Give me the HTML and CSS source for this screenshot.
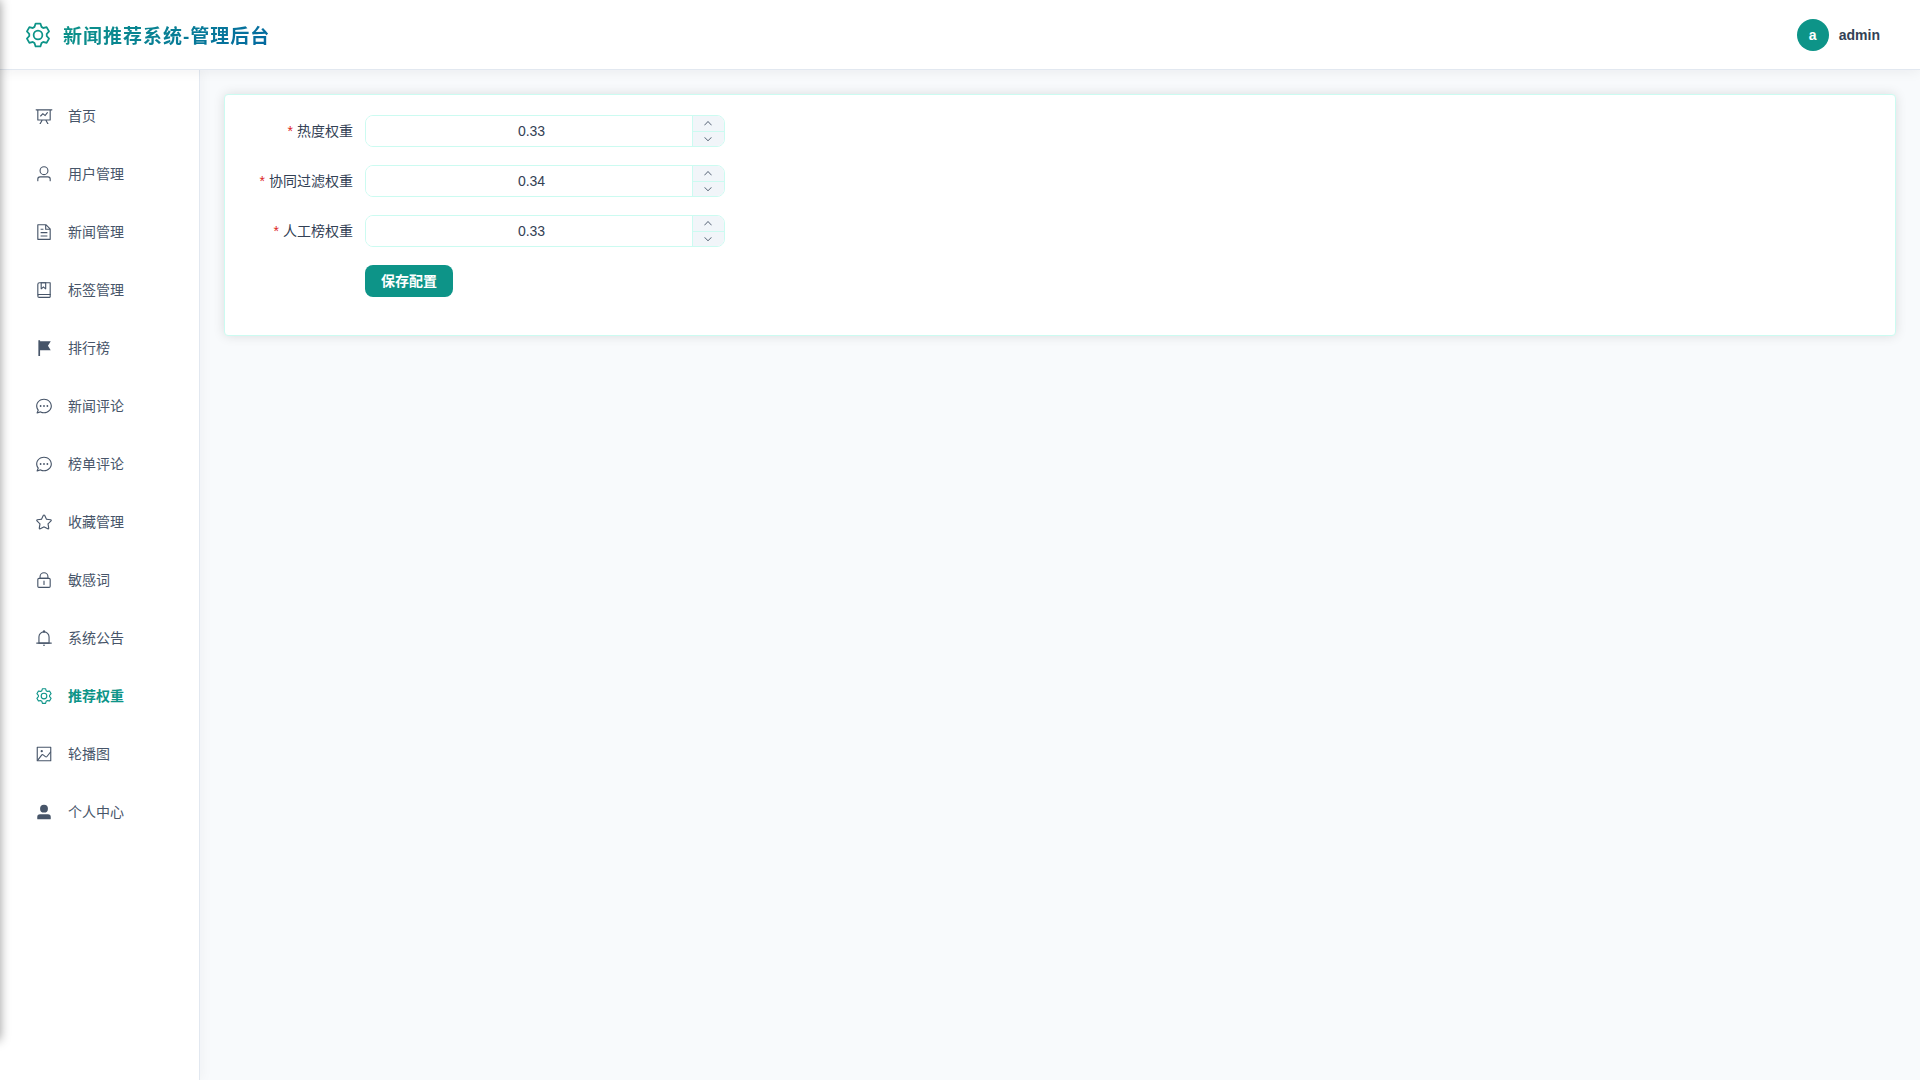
FILE: index.html
```html
<!DOCTYPE html>
<html lang="zh-CN">
<head>
  <meta charset="UTF-8">
  <meta name="viewport" content="width=device-width, initial-scale=1.0">
  <title>新闻推荐系统-管理后台</title>
  <link rel="stylesheet" href="styles.css">
</head>
<body>
  <!-- Icons -->
  <svg class="icon-sprite" xmlns="http://www.w3.org/2000/svg">
    <symbol id="icon-setting" viewBox="0 0 1024 1024"><path d="M600.704 64a32 32 0 0 1 30.464 22.208l35.2 109.376c14.784 7.232 28.928 15.36 42.432 24.512l112.384-24.192a32 32 0 0 1 34.432 15.36L944.32 364.8a32 32 0 0 1-4.032 37.504l-77.12 85.12a357.12 357.12 0 0 1 0 49.024l77.12 85.248a32 32 0 0 1 4.032 37.504l-88.704 153.6a32 32 0 0 1-34.432 15.296L708.8 803.904c-13.44 9.088-27.648 17.28-42.368 24.512l-35.264 109.376A32 32 0 0 1 600.704 960H423.296a32 32 0 0 1-30.464-22.208L357.696 828.48a351.616 351.616 0 0 1-42.56-24.64l-112.32 24.256a32 32 0 0 1-34.432-15.36L79.68 659.2a32 32 0 0 1 4.032-37.504l77.12-85.248a357.12 357.12 0 0 1 0-48.896l-77.12-85.248A32 32 0 0 1 79.68 364.8l88.704-153.6a32 32 0 0 1 34.432-15.296l112.32 24.256c13.568-9.152 27.776-17.408 42.56-24.64l35.2-109.312A32 32 0 0 1 423.232 64H600.64zm-23.424 64H446.72l-36.352 113.088-24.512 11.968a294.113 294.113 0 0 0-34.816 20.096l-22.656 15.36-116.224-25.088-65.28 113.152 79.68 88.192-1.92 27.136a293.12 293.12 0 0 0 0 40.192l1.92 27.136-79.808 88.192 65.344 113.152 116.224-25.024 22.656 15.296a294.113 294.113 0 0 0 34.816 20.096l24.512 11.968L446.72 896h130.688l36.48-113.152 24.448-11.904a288.282 288.282 0 0 0 34.752-20.096l22.592-15.296 116.288 25.024 65.28-113.152-79.744-88.192 1.92-27.136a293.12 293.12 0 0 0 0-40.256l-1.92-27.136 79.808-88.128-65.344-113.152-116.288 24.96-22.592-15.232a287.616 287.616 0 0 0-34.752-20.096l-24.448-11.904L577.344 128zM512 320a192 192 0 1 1 0 384 192 192 0 0 1 0-384m0 64a128 128 0 1 0 0 256 128 128 0 0 0 0-256"/></symbol>
    <symbol id="icon-data" viewBox="0 0 1024 1024"><path d="M359.168 768H160a32 32 0 0 1-32-32V192H64a32 32 0 0 1 0-64h896a32 32 0 1 1 0 64h-64v544a32 32 0 0 1-32 32H665.216l110.848 192h-73.856L591.36 768H433.024L322.176 960H248.32zM832 192H192v512h640zM342.656 534.656a32 32 0 1 1-45.312-45.312L444.992 341.76l125.44 94.08L679.04 300.032a32 32 0 1 1 49.92 39.936L581.632 524.224 451.008 426.24z"/></symbol>
    <symbol id="icon-user" viewBox="0 0 1024 1024"><path d="M512 512a192 192 0 1 0 0-384 192 192 0 0 0 0 384m0 64a256 256 0 1 1 0-512 256 256 0 0 1 0 512m320 320v-96a96 96 0 0 0-96-96H288a96 96 0 0 0-96 96v96a32 32 0 1 1-64 0v-96a160 160 0 0 1 160-160h448a160 160 0 0 1 160 160v96a32 32 0 1 1-64 0"/></symbol>
    <symbol id="icon-document" viewBox="0 0 1024 1024"><path d="M832 384H576V128H192v768h640zm-26.496-64L640 154.496V320zM160 64h480l256 256v608a32 32 0 0 1-32 32H160a32 32 0 0 1-32-32V96a32 32 0 0 1 32-32m160 448h384v64H320zm0-192h160v64H320zm0 384h384v64H320z"/></symbol>
    <symbol id="icon-collection" viewBox="0 0 1024 1024"><path d="M192 736h640V128H256a64 64 0 0 0-64 64zm64-672h608a32 32 0 0 1 32 32v672a32 32 0 0 1-32 32H160l-32 57.536V192A128 128 0 0 1 256 64"/><path d="M240 800a48 48 0 1 0 0 96h592v-96zm0-64h656v160a64 64 0 0 1-64 64H240a112 112 0 0 1 0-224m144-608v250.88l96-76.8 96 76.8V128zm-64-64h320v381.44a32 32 0 0 1-51.968 24.96L480 384l-108.032 86.4A32 32 0 0 1 320 445.44z"/></symbol>
    <symbol id="icon-flag" viewBox="0 0 1024 1024"><path d="M288 128h608L736 384l160 256H288v320h-96V64h96z"/></symbol>
    <symbol id="icon-chat" viewBox="0 0 1024 1024"><path d="m174.72 855.68 135.296-45.12 23.68 11.84C388.096 849.536 448.576 864 512 864c211.84 0 384-166.784 384-352S723.84 160 512 160 128 326.784 128 512c0 69.12 24.96 139.264 70.848 199.232l22.08 28.8-46.272 115.584zm-45.248 82.56A32 32 0 0 1 89.6 896l58.368-145.92C94.72 680.32 64 596.864 64 512 64 299.904 256 96 512 96s448 203.904 448 416-192 416-448 416a461.056 461.056 0 0 1-206.912-48.384l-175.616 58.56z"/><path d="M512 563.2a51.2 51.2 0 1 1 0-102.4 51.2 51.2 0 0 1 0 102.4m192 0a51.2 51.2 0 1 1 0-102.4 51.2 51.2 0 0 1 0 102.4m-384 0a51.2 51.2 0 1 1 0-102.4 51.2 51.2 0 0 1 0 102.4"/></symbol>
    <symbol id="icon-star" viewBox="0 0 1024 1024"><path d="m512 747.84 228.16 119.936a6.4 6.4 0 0 0 9.28-6.72l-43.52-254.08 184.512-179.904a6.4 6.4 0 0 0-3.52-10.88l-255.104-37.12L517.76 147.904a6.4 6.4 0 0 0-11.52 0L392.192 379.072l-255.104 37.12a6.4 6.4 0 0 0-3.52 10.88L318.08 606.976l-43.584 254.08a6.4 6.4 0 0 0 9.28 6.72zM313.6 924.48a70.4 70.4 0 0 1-102.144-74.24l37.888-220.928L88.96 472.96A70.4 70.4 0 0 1 128 352.896l221.76-32.256 99.2-200.96a70.4 70.4 0 0 1 126.208 0l99.2 200.96 221.824 32.256a70.4 70.4 0 0 1 39.04 120.064L774.72 629.376l37.888 220.928a70.4 70.4 0 0 1-102.144 74.24L512 820.096l-198.4 104.32z"/></symbol>
    <symbol id="icon-lock" viewBox="0 0 1024 1024"><path d="M224 448a32 32 0 0 0-32 32v384a32 32 0 0 0 32 32h576a32 32 0 0 0 32-32V480a32 32 0 0 0-32-32zm0-64h576a96 96 0 0 1 96 96v384a96 96 0 0 1-96 96H224a96 96 0 0 1-96-96V480a96 96 0 0 1 96-96"/><path d="M512 544a32 32 0 0 1 32 32v192a32 32 0 1 1-64 0V576a32 32 0 0 1 32-32m192-160v-64a192 192 0 1 0-384 0v64zM512 64a256 256 0 0 1 256 256v128H256V320A256 256 0 0 1 512 64"/></symbol>
    <symbol id="icon-bell" viewBox="0 0 1024 1024"><path d="M512 64a64 64 0 0 1 64 64v64H448v-64a64 64 0 0 1 64-64"/><path d="M256 768h512V448a256 256 0 1 0-512 0zm256-640a320 320 0 0 1 320 320v384H192V448a320 320 0 0 1 320-320"/><path d="M96 768h832q32 0 32 32t-32 32H96q-32 0-32-32t32-32m352 128h128a64 64 0 0 1-128 0"/></symbol>
    <symbol id="icon-picture" viewBox="0 0 1024 1024"><path d="M160 160v704h704V160zm-32-64h768a32 32 0 0 1 32 32v768a32 32 0 0 1-32 32H128a32 32 0 0 1-32-32V128a32 32 0 0 1 32-32"/><path d="M384 288q64 0 64 64t-64 64q-64 0-64-64t64-64M185.408 876.992l-50.816-38.912L350.72 556.032a96 96 0 0 1 134.592-17.856l1.856 1.472 122.88 99.136a32 32 0 0 0 44.992-4.864l216-269.888 49.92 39.936-215.808 269.824-.256.32a96 96 0 0 1-135.04 14.464l-122.88-99.072-.64-.512a32 32 0 0 0-44.8 5.952z"/></symbol>
    <symbol id="icon-user-filled" viewBox="0 0 1024 1024"><path d="M288 320a224 224 0 1 0 448 0 224 224 0 1 0-448 0m544 608H160a32 32 0 0 1-32-32v-96a160 160 0 0 1 160-160h448a160 160 0 0 1 160 160v96a32 32 0 0 1-32 32z"/></symbol>
    <symbol id="icon-up" viewBox="0 0 1024 1024"><path d="m488.832 344.32-339.84 356.672a32 32 0 0 0 0 44.16l.384.384a29.44 29.44 0 0 0 42.688 0l320-335.872 319.872 335.872a29.44 29.44 0 0 0 42.688 0l.384-.384a32 32 0 0 0 0-44.16L535.168 344.32a32 32 0 0 0-46.336 0"/></symbol>
    <symbol id="icon-down" viewBox="0 0 1024 1024"><path d="M831.872 340.864 512 652.672 192.128 340.864a30.592 30.592 0 0 0-42.752 0 29.12 29.12 0 0 0 0 41.6L489.664 714.24a32 32 0 0 0 44.672 0l340.288-331.712a29.12 29.12 0 0 0 0-41.728 30.592 30.592 0 0 0-42.752 0z"/></symbol>
  </svg>

  <!-- Header -->
  <header class="header">
    <div class="brand">
      <svg class="brand-icon"><use href="#icon-setting"/></svg>
      <span class="brand-title">新闻推荐系统-管理后台</span>
    </div>
    <button type="button" class="profile">
      <span class="avatar">a</span>
      <span class="username">admin</span>
    </button>
  </header>

  <div class="layout">
    <!-- Sidebar -->
    <nav class="sidebar">
      <a href="#" class="menu-item"><svg class="menu-icon"><use href="#icon-data"/></svg>首页</a>
      <a href="#" class="menu-item"><svg class="menu-icon"><use href="#icon-user"/></svg>用户管理</a>
      <a href="#" class="menu-item"><svg class="menu-icon"><use href="#icon-document"/></svg>新闻管理</a>
      <a href="#" class="menu-item"><svg class="menu-icon"><use href="#icon-collection"/></svg>标签管理</a>
      <a href="#" class="menu-item"><svg class="menu-icon"><use href="#icon-flag"/></svg>排行榜</a>
      <a href="#" class="menu-item"><svg class="menu-icon"><use href="#icon-chat"/></svg>新闻评论</a>
      <a href="#" class="menu-item"><svg class="menu-icon"><use href="#icon-chat"/></svg>榜单评论</a>
      <a href="#" class="menu-item"><svg class="menu-icon"><use href="#icon-star"/></svg>收藏管理</a>
      <a href="#" class="menu-item"><svg class="menu-icon"><use href="#icon-lock"/></svg>敏感词</a>
      <a href="#" class="menu-item"><svg class="menu-icon"><use href="#icon-bell"/></svg>系统公告</a>
      <a href="#" class="menu-item active"><svg class="menu-icon"><use href="#icon-setting"/></svg>推荐权重</a>
      <a href="#" class="menu-item"><svg class="menu-icon"><use href="#icon-picture"/></svg>轮播图</a>
      <a href="#" class="menu-item"><svg class="menu-icon"><use href="#icon-user-filled"/></svg>个人中心</a>
    </nav>

    <!-- Main Content -->
    <main class="main">
      <section class="card">
        <form class="weight-form">
          <div class="form-item">
            <label for="hot">热度权重</label>
            <div class="number-input">
              <input type="text" inputmode="decimal" id="hot" value="0.33">
              <div class="controls">
                <button type="button" data-step="0.01" aria-label="增加"><svg><use href="#icon-up"/></svg></button>
                <button type="button" data-step="-0.01" aria-label="减少"><svg><use href="#icon-down"/></svg></button>
              </div>
            </div>
          </div>
          <div class="form-item">
            <label for="cf">协同过滤权重</label>
            <div class="number-input">
              <input type="text" inputmode="decimal" id="cf" value="0.34">
              <div class="controls">
                <button type="button" data-step="0.01" aria-label="增加"><svg><use href="#icon-up"/></svg></button>
                <button type="button" data-step="-0.01" aria-label="减少"><svg><use href="#icon-down"/></svg></button>
              </div>
            </div>
          </div>
          <div class="form-item">
            <label for="manual">人工榜权重</label>
            <div class="number-input">
              <input type="text" inputmode="decimal" id="manual" value="0.33">
              <div class="controls">
                <button type="button" data-step="0.01" aria-label="增加"><svg><use href="#icon-up"/></svg></button>
                <button type="button" data-step="-0.01" aria-label="减少"><svg><use href="#icon-down"/></svg></button>
              </div>
            </div>
          </div>
          <div class="form-item form-actions">
            <button type="button" class="save-btn">保存配置</button>
          </div>
        </form>
      </section>
    </main>
  </div>

  <!-- Closed drawer, only its shadow shows at the left edge -->
  <aside class="drawer"></aside>

  <script>
    // Step buttons
    document.querySelectorAll('.controls button').forEach(btn => {
      btn.addEventListener('click', () => {
        const input = btn.closest('.number-input').querySelector('input');
        const next = Number(input.value) + Number(btn.dataset.step);
        input.value = Math.min(1, Math.max(0, next)).toFixed(2);
      });
    });
  </script>
</body>
</html>
```
FILE: styles.css
```css
* {
  box-sizing: border-box;
}

body {
  margin: 0;
  min-height: 100vh;
  display: flex;
  flex-direction: column;
  font-family: "Liberation Sans", "Noto Sans CJK SC", sans-serif;
  font-size: 14px;
  color: #334155;
  background: #f8fafc;
}

button,
input {
  font-family: inherit;
  font-size: 14px;
}

svg {
  fill: currentColor;
}

.icon-sprite {
  display: none;
}

/* Header */
.header {
  display: flex;
  align-items: center;
  justify-content: space-between;
  height: 70px;
  padding: 0 24px;
  background: #fff;
  border-bottom: 1px solid #e2e8f0;
  box-shadow: 0 2px 12px rgba(15, 23, 42, 0.06);
  position: relative;
  z-index: 10;
}

.brand {
  display: flex;
  align-items: center;
  gap: 11px;
}

.brand-icon {
  width: 28px;
  height: 28px;
  color: #0d9488;
}

.brand-title {
  font-size: 19px;
  font-weight: 700;
  letter-spacing: 1px;
  background: linear-gradient(135deg, #0d9488, #0369a1);
  -webkit-background-clip: text;
  background-clip: text;
  color: transparent;
}

.profile {
  display: flex;
  align-items: center;
  gap: 10px;
  padding: 8px 16px;
  border: none;
  background: none;
  color: #334155;
  font-weight: 600;
  cursor: pointer;
}

.avatar {
  display: flex;
  align-items: center;
  justify-content: center;
  width: 32px;
  height: 32px;
  border-radius: 50%;
  background: #0d9488;
  color: #fff;
}

/* Sidebar */
.layout {
  display: flex;
  flex: 1;
}

.sidebar {
  width: 200px;
  padding-top: 16px;
  background: #fff;
  border-right: 1px solid #e2e8f0;
  box-shadow: 2px 0 12px rgba(15, 23, 42, 0.04);
}

.menu-item {
  display: flex;
  align-items: center;
  gap: 15px;
  height: 50px;
  margin: 4px 12px 8px;
  padding: 0 23px;
  border-radius: 8px;
  color: #475569;
  text-decoration: none;
}

.menu-item + .menu-item {
  margin-top: 0;
}

.menu-item.active {
  color: #0d9488;
  font-weight: 600;
}

.menu-icon {
  width: 18px;
  height: 18px;
  margin-top: 2px;
}

/* Main content */
.main {
  flex: 1;
  padding: 24px;
}

.card {
  padding: 20px;
  background: #fff;
  border: 1px solid #ccfbf1;
  border-radius: 4px;
  box-shadow: 0 0 12px rgba(0, 0, 0, 0.12);
}

.weight-form {
  max-width: 480px;
}

.form-item {
  display: flex;
  margin-bottom: 18px;
}

.form-item label {
  width: 120px;
  padding-right: 12px;
  line-height: 32px;
  text-align: right;
}

.form-item label::before {
  content: "*";
  margin-right: 4px;
  color: #dc2626;
}

.form-actions {
  padding-left: 120px;
}

.number-input {
  display: flex;
  flex: 1;
  height: 32px;
  border: 1px solid #ccfbf1;
  border-radius: 8px;
  overflow: hidden;
}

.number-input input {
  flex: 1;
  min-width: 0;
  padding: 0 10px 0 15px;
  border: none;
  outline: none;
  background: #fff;
  color: #334155;
  text-align: center;
}

.controls {
  display: flex;
  flex-direction: column;
  width: 32px;
  border-left: 1px solid #ccfbf1;
}

.controls button {
  display: flex;
  flex: 1;
  align-items: center;
  justify-content: center;
  padding: 0 1px 0 0;
  border: none;
  background: #f1f5f9;
  color: #475569;
  cursor: pointer;
}

.controls button:first-child {
  border-bottom: 1px solid #ccfbf1;
}

.controls svg {
  width: 10px;
  height: 10px;
}

.save-btn {
  height: 32px;
  padding: 0 16px 2px;
  border: none;
  border-radius: 8px;
  background: #0d9488;
  color: #fff;
  font-weight: 600;
  cursor: pointer;
}

/* Drawer */
.drawer {
  position: fixed;
  top: 0;
  right: 100%;
  width: 240px;
  height: calc(100% - 40px);
  box-shadow: 0 0 10px rgba(0, 0, 0, 0.4);
  z-index: 20;
}
```
